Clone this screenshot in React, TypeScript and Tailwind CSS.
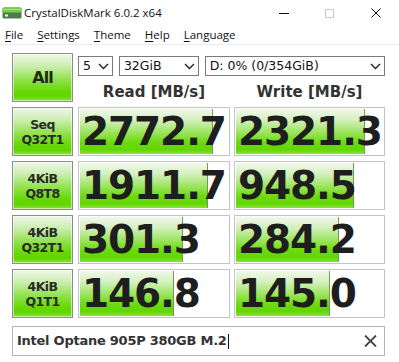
import React from "react";

const rows = [
  { top: "Seq", bottom: "Q32T1", read: "2772.7", write: "2321.3", readFill: 88.7, writeFill: 86.6 },
  { top: "4KiB", bottom: "Q8T8", read: "1911.7", write: "948.5", readFill: 85.3, writeFill: 79.2 },
  { top: "4KiB", bottom: "Q32T1", read: "301.3", write: "284.2", readFill: 68.7, writeFill: 69.1 },
  { top: "4KiB", bottom: "Q1T1", read: "146.8", write: "145.0", readFill: 62.7, writeFill: 63.1 },
];

const menu = ["File", "Settings", "Theme", "Help", "Language"];

const Chevron = () => (
  <svg width="11" height="7" viewBox="0 0 11 7" className="shrink-0">
    <path d="M1 1 L5.5 5.5 L10 1" fill="none" stroke="#222" strokeWidth="1.4" />
  </svg>
);

const Select = ({ value, className }: { value: string; className: string }) => (
  <div
    className={`flex h-[20px] items-center justify-between border border-[#7a7a7a] bg-white pl-[4px] pr-[3px] font-['DejaVu_Sans',sans-serif] text-[12.5px] leading-none text-[#111] ${className}`}
  >
    <span>{value}</span>
    <Chevron />
  </div>
);

const ValueBox = ({ value, fill, width }: { value: string; fill: number; width: string }) => (
  <div className={`relative flex h-[49px] items-center border border-[#c4c4c4] bg-white p-px ${width}`}>
    <div
      className="absolute top-px bottom-px left-px border-r border-[#6f9a52] bg-[linear-gradient(to_bottom,#f1f8ec_0%,#d3f0bc_25%,#96e352_55%,#6bda0c_75%,#64d600_90%,#86e23c_100%)]"
      style={{ width: `${fill}%` }}
    />
    <span className="relative pl-[2px] font-['DejaVu_Sans',sans-serif] text-[39px] font-bold leading-none tracking-[-1.1px] text-[#1e1e1e]">
      {value}
    </span>
  </div>
);

const LabelBox = ({ children, height }: { children: React.ReactNode; height: string }) => (
  <div
    className={`flex w-[61px] flex-col items-center justify-center border border-[#8c8c8c] bg-[linear-gradient(to_bottom,#eef7e8_0%,#cdeeb2_25%,#90e24a_55%,#68d808_78%,#62d400_90%,#8ae340_100%)] shadow-[inset_0_0_0_1px_rgba(255,255,255,0.55)] font-['DejaVu_Sans',sans-serif] font-bold text-[#2a2a2a] ${height}`}
  >
    {children}
  </div>
);

export default function App() {
  return (
    <div className="h-[362px] w-[399px] overflow-hidden bg-white">
      {/* title bar */}
      <div className="flex h-[26px] items-center font-['Open_Sans',sans-serif] text-[11.5px] text-[#111]">
        <svg width="20" height="12" viewBox="0 0 20 12" className="ml-[2px] mr-[2px]">
          <rect x="0.5" y="0.5" width="19" height="11" rx="1.5" fill="#4d7a4f" />
          <rect x="0.5" y="0.5" width="19" height="5" rx="1.5" fill="#79cc48" />
          <rect x="1" y="2" width="18" height="1" fill="#a8e27e" />
          <rect x="3" y="7.5" width="3" height="2" fill="#e8f5e0" />
        </svg>
        <span>CrystalDiskMark 6.0.2 x64</span>
        <div className="ml-auto flex items-center">
          <div className="mr-[36px] h-px w-[10px] bg-[#111]" />
          <div className="mr-[37px] h-[9px] w-[9px] border border-[#c8c8c8]" />
          <svg width="10" height="10" viewBox="0 0 10 10" className="mr-[18px]">
            <path d="M0.5 0.5 L9.5 9.5 M9.5 0.5 L0.5 9.5" stroke="#111" strokeWidth="1" />
          </svg>
        </div>
      </div>

      {/* menu */}
      <div className="flex h-[19px] items-center gap-[14px] border-b border-[#ececec] pl-[5px] font-['Open_Sans',sans-serif] text-[11.5px] text-[#111]">
        {menu.map((m) => (
          <span key={m}>
            <span className="underline underline-offset-[2px]">{m[0]}</span>
            {m.slice(1)}
          </span>
        ))}
      </div>

      {/* main */}
      <div className="flex flex-col gap-[5px] pl-[12px] pt-[8px]">
        <div className="flex">
          <LabelBox height="h-[49px]">
            <span className="text-[16px] leading-none tracking-[-1px] text-[#1e2a14]">All</span>
          </LabelBox>
          <div className="ml-[5px] flex w-[307px] flex-col">
            <div className="mt-[3px] flex gap-[6px]">
              <Select value="5" className="w-[35px]" />
              <Select value="32GiB" className="w-[80px]" />
              <Select value="D: 0% (0/354GiB)" className="w-[181px]" />
            </div>
            <div className="mt-[9px] flex font-['DejaVu_Sans',sans-serif] text-[15px] font-bold leading-none text-[#333]">
              <div className="w-[152px] text-center">Read [MB/s]</div>
              <div className="ml-[4px] w-[151px] text-center">Write [MB/s]</div>
            </div>
          </div>
        </div>

        {rows.map((r, i) => (
          <div key={i} className="flex">
            <LabelBox height="h-[49px]">
              <span className="text-[12.5px] leading-[15px] tracking-[-0.6px]">{r.top}</span>
              <span className="text-[12.5px] leading-[15px] tracking-[-0.6px]">{r.bottom}</span>
            </LabelBox>
            <div className="ml-[5px]">
              <ValueBox value={r.read} fill={r.readFill} width="w-[152px]" />
            </div>
            <div className="ml-[4px]">
              <ValueBox value={r.write} fill={r.writeFill} width="w-[151px]" />
            </div>
          </div>
        ))}

        <div className="mt-[3px] flex h-[30px] w-[373px] items-center border border-[#b4b4b4] bg-white pl-[4px] pr-[7px]">
          <span className="font-['DejaVu_Sans',sans-serif] text-[13px] font-bold tracking-[-0.25px] text-[#333]">
            Intel Optane 905P 380GB M.2
          </span>
          <span className="ml-[1px] h-[15px] w-px bg-[#111]" />
          <svg width="13" height="12" viewBox="0 0 13 12" className="ml-auto">
            <path d="M1 0.5 L12 11.5 M12 0.5 L1 11.5" stroke="#444" strokeWidth="1.8" />
          </svg>
        </div>
      </div>
    </div>
  );
}
